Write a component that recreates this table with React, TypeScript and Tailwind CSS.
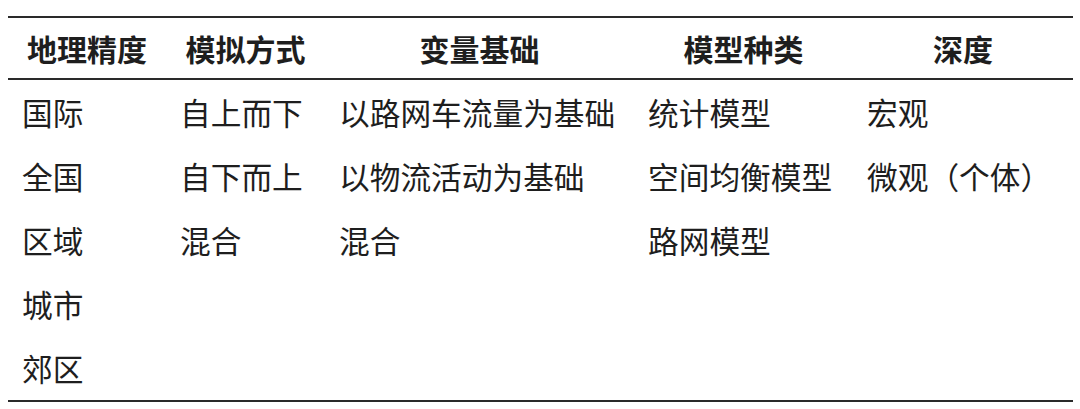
const headers = ['地理精度', '模拟方式', '变量基础', '模型种类', '深度'];

const rows = [
  ['国际', '自上而下', '以路网车流量为基础', '统计模型', '宏观'],
  ['全国', '自下而上', '以物流活动为基础', '空间均衡模型', '微观（个体）'],
  ['区域', '混合', '混合', '路网模型', ''],
  ['城市', '', '', '', ''],
  ['郊区', '', '', '', ''],
];

const cols = 'grid grid-cols-[158px_159px_309px_219px_220px]';

export default function App() {
  return (
    <div className="w-[1080px] h-[409px] bg-white overflow-hidden pt-[16px] pl-[8px] font-['Noto_Sans_CJK_SC',sans-serif] text-[#1e1e1e]">
      <div className="w-[1065px] border-t-2 border-b-2 border-[#2a2a2a]">
        {/* Header */}
        <div className={`${cols} h-[62px] items-center border-b-2 border-[#2a2a2a]`}>
          {headers.map((h) => (
            <div key={h} className="text-center text-[30px] font-bold leading-none">
              {h}
            </div>
          ))}
        </div>

        {/* Body */}
        {rows.map((row, i) => (
          <div key={i} className={`${cols} h-[64px] items-center`}>
            {row.map((cell, j) => (
              <div key={j} className="pl-[14px] text-[30.7px] leading-none whitespace-nowrap">
                {cell}
              </div>
            ))}
          </div>
        ))}
      </div>
    </div>
  );
}
